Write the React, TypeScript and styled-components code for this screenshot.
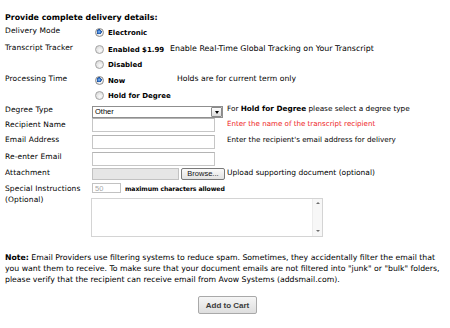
import React from 'react';
import styled, { createGlobalStyle } from 'styled-components';

const GlobalStyle = createGlobalStyle`
  html, body {
    margin: 0;
    padding: 0;
    background: #fff;
  }
  body {
    font-family: "DejaVu Sans", Verdana, sans-serif;
    color: #000;
  }
`;

const Page = styled.div`
  width: 450px;
  height: 328px;
  box-sizing: border-box;
  padding: 11px 5px 0;
  overflow: hidden;
`;

const Title = styled.h2`
  margin: 0;
  height: 14px;
  font-size: 7.9px;
  line-height: 13px;
  font-weight: bold;
`;

const Row = styled.div<{ $mt?: number }>`
  display: flex;
  align-items: flex-start;
  margin-top: ${p => p.$mt ?? 0}px;
`;

const Label = styled.div<{ $pt?: number }>`
  flex: none;
  width: 87px;
  padding-top: ${p => p.$pt ?? 0}px;
  font-size: 7.5px;
  line-height: 10px;
  letter-spacing: 0.1px;
`;

const TallLabel = styled(Label)`
  line-height: 11px;
`;

const RadioGroup = styled.div<{ $w: number; $pb?: number }>`
  display: flex;
  flex-direction: column;
  width: ${p => p.$w}px;
  flex: none;
  padding-bottom: ${p => p.$pb ?? 0}px;
`;

const RadioOption = styled.label`
  display: flex;
  align-items: center;
  height: 15px;
  font-size: 7px;
  font-weight: bold;
  white-space: nowrap;
`;

const Radio = styled.input.attrs({ type: 'radio' })`
  appearance: none;
  width: 9px;
  height: 9px;
  margin: 0 4px 0 3px;
  border-radius: 50%;
  border: 1px solid #a4a4a4;
  box-sizing: border-box;
  background: radial-gradient(circle at 60% 65%, #fbfbfb 0, #e2e2e2 60%, #cfcfcf 100%);

  &:checked {
    border-color: #8c8c8c;
    background:
      radial-gradient(circle at 45% 40%, #8fc2ff 0, #2f6fc4 1.6px, #1d4f99 2.4px, transparent 2.6px),
      radial-gradient(circle at 60% 65%, #fbfbfb 0, #e2e2e2 60%, #cfcfcf 100%);
  }
`;

const Hint = styled.div<{ $pt?: number; $red?: boolean; $size?: number }>`
  padding-top: ${p => p.$pt ?? 0}px;
  font-size: ${p => p.$size ?? 7.5}px;
  line-height: 10px;
  white-space: nowrap;
  color: ${p => (p.$red ? '#ee1c24' : '#000')};
`;

const FieldCell = styled.div<{ $pt?: number }>`
  flex: none;
  width: 135px;
  padding-top: ${p => p.$pt ?? 0}px;
  display: flex;
  align-items: center;
`;

const TextInput = styled.input`
  box-sizing: border-box;
  width: 123px;
  height: 14px;
  margin: 0;
  padding: 0 2px;
  border: 1px solid #c6c6c6;
  border-top-color: #b4b4b4;
  background: #fff;
  font: 8px "Liberation Sans", Arial, sans-serif;
`;

const SelectBox = styled.div`
  box-sizing: border-box;
  display: flex;
  width: 131px;
  height: 12px;
  border: 1px solid #8f8f8f;
  background: #fff;
`;

const SelectValue = styled.div`
  flex: 1;
  padding-left: 2px;
  font: 7.5px/10px "Liberation Sans", Arial, sans-serif;
  color: #000;
`;

const SelectArrow = styled.div`
  flex: none;
  width: 11px;
  box-sizing: border-box;
  margin: 0;
  border: 1px solid #8a8a8a;
  border-radius: 1px;
  background: linear-gradient(#fdfdfd, #dcdcdc);
  display: flex;
  align-items: center;
  justify-content: center;

  &::after {
    content: '';
    border-left: 2.5px solid transparent;
    border-right: 2.5px solid transparent;
    border-top: 3px solid #000;
    margin-top: 1px;
  }
`;

const FileText = styled.div`
  box-sizing: border-box;
  width: 87px;
  height: 12px;
  border: 1px solid #c2c2c2;
  background: #e6e6e6;
`;

const BrowseButton = styled.button`
  box-sizing: border-box;
  width: 44px;
  height: 12px;
  margin: 0 0 0 2px;
  padding: 0;
  border: 1px solid #7a7a7a;
  border-radius: 2px;
  background: linear-gradient(#fafafa, #e2e2e2);
  font: 7.5px/10px "Liberation Sans", Arial, sans-serif;
  color: #111;
`;

const Column = styled.div`
  display: flex;
  flex-direction: column;
`;

const MaxRow = styled.div`
  display: flex;
  align-items: center;
  height: 10px;
`;

const SmallInput = styled.input`
  box-sizing: border-box;
  width: 29px;
  height: 10px;
  margin: 0;
  padding: 0 2px;
  border: 1px solid #c2c2c2;
  font: 7.5px "Liberation Sans", Arial, sans-serif;
  color: #a8a8a8;

  &::placeholder {
    color: #a8a8a8;
  }
`;

const MaxText = styled.span`
  margin-left: 4px;
  font-size: 6.2px;
  font-weight: bold;
  letter-spacing: -0.1px;
  white-space: nowrap;
`;

const TextAreaBox = styled.div`
  box-sizing: border-box;
  display: flex;
  width: 232px;
  height: 39px;
  margin-top: 5px;
  margin-left: -1px;
  border: 1px solid #d4d4d4;
  background: #fff;
`;

const TextArea = styled.textarea`
  flex: 1;
  margin: 0;
  border: none;
  outline: none;
  resize: none;
  font: 8px "Liberation Sans", Arial, sans-serif;
`;

const ScrollTrack = styled.div`
  flex: none;
  width: 10px;
  display: flex;
  flex-direction: column;
  justify-content: space-between;
  align-items: center;
  background: #f7f7f7;
  border-left: 1px solid #ececec;
  padding: 3px 0 4px;
  box-sizing: border-box;
`;

const ScrollArrow = styled.span<{ $down?: boolean }>`
  width: 0;
  height: 0;
  border-left: 2px solid transparent;
  border-right: 2px solid transparent;
  ${p =>
    p.$down
      ? 'border-top: 2px solid #6e6e6e;'
      : 'border-bottom: 2px solid #6e6e6e;'}
`;

const Note = styled.p`
  margin: 15px 0 0;
  font-size: 7.75px;
  line-height: 11px;
  white-space: nowrap;
  color: #000;
`;

const ButtonRow = styled.div`
  display: flex;
  justify-content: center;
  margin-top: 11px;
`;

const CartButton = styled.button`
  box-sizing: border-box;
  width: 59px;
  height: 18px;
  margin-left: 5px;
  padding: 0;
  border: 1px solid #a9a9a9;
  border-radius: 2px;
  background: linear-gradient(#f6f6f6, #dedede);
  font: bold 8px "Liberation Sans", Arial, sans-serif;
  color: #3a3a3a;
`;

export default function App() {
  return (
    <>
      <GlobalStyle />
      <Page>
        <Title>Provide complete delivery details:</Title>

        <Row>
          <Label $pt={1}>Delivery Mode</Label>
          <RadioGroup $w={80} $pb={2}>
            <RadioOption>
              <Radio name="mode" defaultChecked />
              Electronic
            </RadioOption>
          </RadioGroup>
        </Row>

        <Row>
          <Label $pt={1}>Transcript Tracker</Label>
          <RadioGroup $w={78} $pb={1}>
            <RadioOption>
              <Radio name="tracker" />
              Enabled $1.99
            </RadioOption>
            <RadioOption>
              <Radio name="tracker" />
              Disabled
            </RadioOption>
          </RadioGroup>
          <Hint $pt={2} $size={7.9}>Enable Real-Time Global Tracking on Your Transcript</Hint>
        </Row>

        <Row>
          <Label $pt={1}>Processing Time</Label>
          <RadioGroup $w={85}>
            <RadioOption>
              <Radio name="time" defaultChecked />
              Now
            </RadioOption>
            <RadioOption>
              <Radio name="time" />
              Hold for Degree
            </RadioOption>
          </RadioGroup>
          <Hint $pt={1} $size={7.7}>Holds are for current term only</Hint>
        </Row>

        <Row>
          <Label $pt={2}>Degree Type</Label>
          <FieldCell $pt={3}>
            <SelectBox>
              <SelectValue>Other</SelectValue>
              <SelectArrow />
            </SelectBox>
          </FieldCell>
          <Hint $pt={1} $size={7.3}>
            For <b>Hold for Degree</b> please select a degree type
          </Hint>
        </Row>

        <Row>
          <Label $pt={2}>Recipient Name</Label>
          <FieldCell>
            <TextInput />
          </FieldCell>
          <Hint $pt={1} $red $size={7.1}>Enter the name of the transcript recipient</Hint>
        </Row>

        <Row $mt={3}>
          <Label>Email Address</Label>
          <FieldCell>
            <TextInput />
          </FieldCell>
          <Hint $size={7.2}>Enter the recipient's email address for delivery</Hint>
        </Row>

        <Row $mt={3}>
          <Label>Re-enter Email</Label>
          <FieldCell>
            <TextInput />
          </FieldCell>
        </Row>

        <Row $mt={2}>
          <Label>Attachment</Label>
          <FieldCell>
            <FileText />
            <BrowseButton>Browse...</BrowseButton>
          </FieldCell>
          <Hint $size={7.5}>Upload supporting document (optional)</Hint>
        </Row>

        <Row $mt={3}>
          <TallLabel>
            Special Instructions
            <br />
            (Optional)
          </TallLabel>
          <Column>
            <MaxRow>
              <SmallInput placeholder="50" />
              <MaxText>maximum characters allowed</MaxText>
            </MaxRow>
            <TextAreaBox>
              <TextArea />
              <ScrollTrack>
                <ScrollArrow />
                <ScrollArrow $down />
              </ScrollTrack>
            </TextAreaBox>
          </Column>
        </Row>

        <Note>
          <b>Note:</b> Email Providers use filtering systems to reduce spam. Sometimes, they accidentally filter the email that
          <br />
          you want them to receive. To make sure that your document emails are not filtered into "junk" or "bulk" folders,
          <br />
          please verify that the recipient can receive email from Avow Systems (addsmail.com).
        </Note>

        <ButtonRow>
          <CartButton>Add to Cart</CartButton>
        </ButtonRow>
      </Page>
    </>
  );
}
